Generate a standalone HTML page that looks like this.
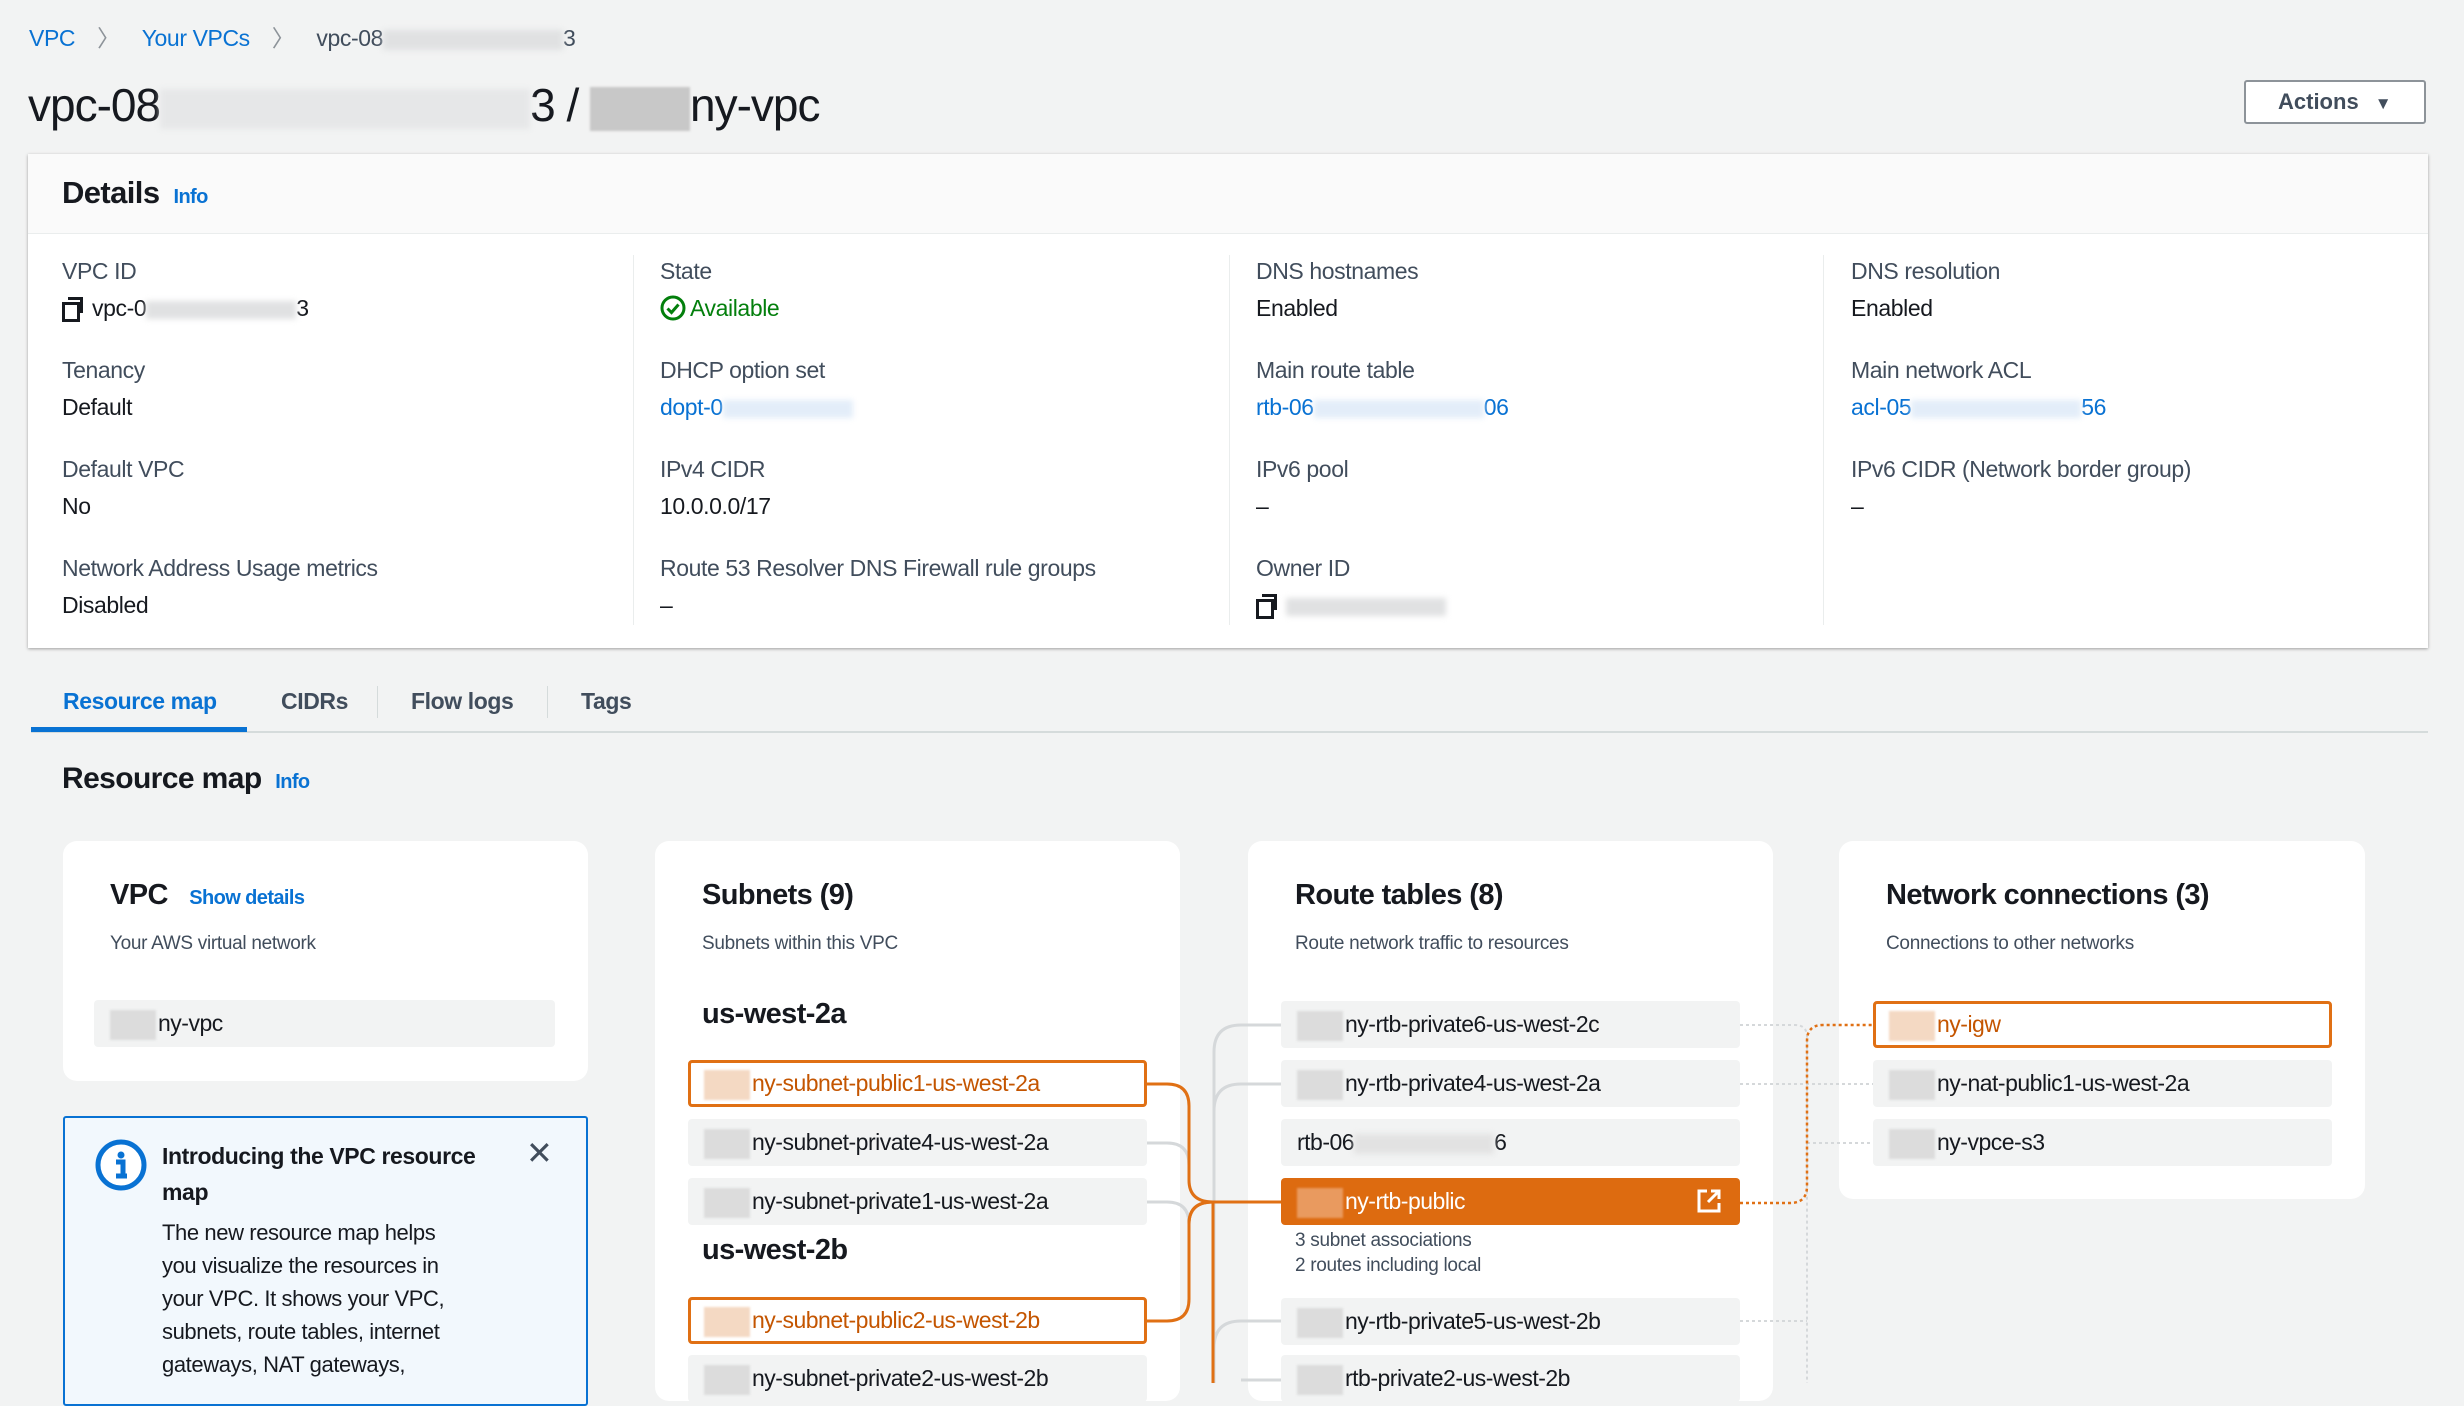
<!DOCTYPE html>
<html><head><meta charset="utf-8"><style>
*{box-sizing:border-box;margin:0;padding:0}
body{width:2464px;height:1383px;overflow:hidden;background:#f2f3f3;font-family:"Liberation Sans",sans-serif;color:#16191f;position:relative}
.a{position:absolute;white-space:nowrap}
.lnk{color:#0972d3}
.lbl{color:#414d5c;font-size:23px;letter-spacing:-0.4px}
.val{font-size:23px;letter-spacing:-0.4px}
.blur{display:inline-block;background:#e0e1e2;filter:blur(3px);vertical-align:middle}
.card{position:absolute;background:#fff;border-radius:14px}
.ct{position:absolute;font-size:29px;font-weight:bold;letter-spacing:-0.6px}
.cs{position:absolute;font-size:19px;color:#414d5c;letter-spacing:-0.3px}
.it{position:absolute;height:47px;background:#f2f3f3;border-radius:4px;font-size:23px;letter-spacing:-0.5px;line-height:47px;padding-left:16px;color:#16191f}
.it .sq{display:inline-block;width:46px;height:30px;background:#dcdcdc;vertical-align:middle;margin-right:2px;filter:blur(1px)}
.or{background:#fff;border:3px solid #e07014;color:#c45500;line-height:41px;padding-left:13px}
.or .sq{background:#f4d9c3}
.cp{display:inline-block;width:22px;height:22px;position:relative;vertical-align:-3px;margin-right:8px}
.cp:before{content:"";position:absolute;left:0;top:5px;width:12px;height:14px;border:3px solid #16191f}
.cp:after{content:"";position:absolute;left:6px;top:0;width:12px;height:13px;border-top:3px solid #16191f;border-right:3px solid #16191f}
</style></head><body>
<div class="a" style="left:29px;top:19px;font-size:23px;letter-spacing:-0.4px"><span class="lnk">VPC</span><span style="color:#8d9399;margin:0 22px">〉</span><span class="lnk">Your VPCs</span><span style="color:#8d9399;margin:0 22px">〉</span><span style="color:#414d5c">vpc-08<span class="blur" style="width:180px;height:20px"></span>3</span></div>
<div class="a" style="left:28px;top:78px;font-size:46px;letter-spacing:-1px">vpc-08<span class="blur" style="width:370px;height:40px;background:#e6e7e8"></span>3 / <span class="blur" style="width:100px;height:44px;background:#c8c8c8;filter:blur(1px)"></span>ny-vpc</div>
<div class="a" style="left:2244px;top:80px;width:182px;height:44px;border:2px solid #8d9399;border-radius:3px;background:#fff;font-size:22px;font-weight:bold;line-height:40px;padding-left:32px;color:#414d5c">Actions <span style="font-size:17px;margin-left:10px">▼</span></div>

<div class="a" style="left:28px;top:154px;width:2400px;height:494px;background:#fff;box-shadow:0 1px 3px rgba(0,0,0,.35)"></div>
<div class="a" style="left:28px;top:154px;width:2400px;height:80px;background:#fafafa;border-bottom:1px solid #eaeded"></div>
<div class="a" style="left:62px;top:175px;font-size:31px;font-weight:bold;letter-spacing:-0.6px">Details <span class="lnk" style="font-size:20px;margin-left:6px">Info</span></div>
<div class="a" style="left:633px;top:255px;width:1px;height:370px;background:#eaeded"></div>
<div class="a" style="left:1229px;top:255px;width:1px;height:370px;background:#eaeded"></div>
<div class="a" style="left:1823px;top:255px;width:1px;height:370px;background:#eaeded"></div>

<div class="a lbl" style="left:62px;top:258px">VPC ID</div>
<div class="a val" style="left:62px;top:295px"><span class="cp"></span>vpc-0<span class="blur" style="width:150px;height:18px"></span>3</div>
<div class="a lbl" style="left:62px;top:357px">Tenancy</div>
<div class="a val" style="left:62px;top:394px">Default</div>
<div class="a lbl" style="left:62px;top:456px">Default VPC</div>
<div class="a val" style="left:62px;top:493px">No</div>
<div class="a lbl" style="left:62px;top:555px">Network Address Usage metrics</div>
<div class="a val" style="left:62px;top:592px">Disabled</div>

<div class="a lbl" style="left:660px;top:258px">State</div>
<div class="a val" style="left:660px;top:295px;color:#037f0c"><svg width="26" height="26" viewBox="0 0 26 26" style="vertical-align:-5px;margin-right:4px"><circle cx="13" cy="13" r="11" fill="none" stroke="#037f0c" stroke-width="3"/><path d="M7.5 13.5l4 4 7-8" fill="none" stroke="#037f0c" stroke-width="3"/></svg>Available</div>
<div class="a lbl" style="left:660px;top:357px">DHCP option set</div>
<div class="a val lnk" style="left:660px;top:394px">dopt-0<span class="blur" style="width:130px;height:18px;background:#e3edf9"></span></div>
<div class="a lbl" style="left:660px;top:456px">IPv4 CIDR</div>
<div class="a val" style="left:660px;top:493px">10.0.0.0/17</div>
<div class="a lbl" style="left:660px;top:555px">Route 53 Resolver DNS Firewall rule groups</div>
<div class="a val" style="left:660px;top:592px">–</div>

<div class="a lbl" style="left:1256px;top:258px">DNS hostnames</div>
<div class="a val" style="left:1256px;top:295px">Enabled</div>
<div class="a lbl" style="left:1256px;top:357px">Main route table</div>
<div class="a val lnk" style="left:1256px;top:394px">rtb-06<span class="blur" style="width:170px;height:18px;background:#e3edf9"></span>06</div>
<div class="a lbl" style="left:1256px;top:456px">IPv6 pool</div>
<div class="a val" style="left:1256px;top:493px">–</div>
<div class="a lbl" style="left:1256px;top:555px">Owner ID</div>
<div class="a val" style="left:1256px;top:592px"><span class="cp"></span><span class="blur" style="width:160px;height:18px"></span></div>

<div class="a lbl" style="left:1851px;top:258px">DNS resolution</div>
<div class="a val" style="left:1851px;top:295px">Enabled</div>
<div class="a lbl" style="left:1851px;top:357px">Main network ACL</div>
<div class="a val lnk" style="left:1851px;top:394px">acl-05<span class="blur" style="width:170px;height:18px;background:#e3edf9"></span>56</div>
<div class="a lbl" style="left:1851px;top:456px">IPv6 CIDR (Network border group)</div>
<div class="a val" style="left:1851px;top:493px">–</div>

<div class="a" style="left:31px;top:731px;width:2397px;height:2px;background:#d5dbdb"></div>
<div class="a" style="left:31px;top:727px;width:216px;height:5px;background:#0972d3"></div>
<div class="a" style="left:377px;top:686px;width:1px;height:32px;background:#d5dbdb"></div>
<div class="a" style="left:547px;top:686px;width:1px;height:32px;background:#d5dbdb"></div>
<div class="a" style="left:63px;top:688px;font-size:23px;font-weight:bold;color:#0972d3;letter-spacing:-0.4px">Resource map</div>
<div class="a" style="left:281px;top:688px;font-size:23px;font-weight:bold;color:#414d5c;letter-spacing:-0.4px">CIDRs</div>
<div class="a" style="left:411px;top:688px;font-size:23px;font-weight:bold;color:#414d5c;letter-spacing:-0.4px">Flow logs</div>
<div class="a" style="left:581px;top:688px;font-size:23px;font-weight:bold;color:#414d5c;letter-spacing:-0.4px">Tags</div>
<div class="a" style="left:62px;top:762px;font-size:30px;font-weight:bold;letter-spacing:-0.6px">Resource map <span class="lnk" style="font-size:20px;margin-left:6px">Info</span></div>

<div class="card" style="left:63px;top:841px;width:525px;height:240px"></div>
<div class="card" style="left:655px;top:841px;width:525px;height:560px"></div>
<div class="card" style="left:1248px;top:841px;width:525px;height:560px"></div>
<div class="card" style="left:1839px;top:841px;width:526px;height:358px"></div>

<div class="ct" style="left:110px;top:879px">VPC <span class="lnk" style="font-size:20px;margin-left:14px">Show details</span></div>
<div class="cs" style="left:110px;top:933px">Your AWS virtual network</div>
<div class="it" style="left:94px;top:1000px;width:461px"><span class="sq"></span>ny-vpc</div>

<div class="a" style="left:63px;top:1116px;width:525px;height:290px;background:#f2f8fd;border:2px solid #0972d3;border-radius:3px"></div>
<svg class="a" style="left:94px;top:1138px" width="54" height="54" viewBox="0 0 54 54"><circle cx="27" cy="27" r="23" fill="#fff" stroke="#0972d3" stroke-width="5"/><circle cx="27" cy="17" r="3.5" fill="#0972d3"/><path d="M22 24h7v14M22 38h11" stroke="#0972d3" stroke-width="5" fill="none"/></svg>
<div class="a" style="left:162px;top:1138px;font-size:23px;font-weight:bold;line-height:36px;letter-spacing:-0.4px">Introducing the VPC resource<br>map</div>
<div class="a" style="left:526px;top:1134px;font-size:32px;color:#414d5c">✕</div>
<div class="a" style="left:162px;top:1216px;font-size:22px;line-height:33px;letter-spacing:-0.4px">The new resource map helps<br>you visualize the resources in<br>your VPC. It shows your VPC,<br>subnets, route tables, internet<br>gateways, NAT gateways,</div>

<div class="ct" style="left:702px;top:879px">Subnets (9)</div>
<div class="cs" style="left:702px;top:933px">Subnets within this VPC</div>
<div class="ct" style="left:702px;top:998px">us-west-2a</div>
<div class="it or" style="left:688px;top:1060px;width:459px"><span class="sq"></span>ny-subnet-public1-us-west-2a</div>
<div class="it" style="left:688px;top:1119px;width:459px"><span class="sq"></span>ny-subnet-private4-us-west-2a</div>
<div class="it" style="left:688px;top:1178px;width:459px"><span class="sq"></span>ny-subnet-private1-us-west-2a</div>
<div class="ct" style="left:702px;top:1234px">us-west-2b</div>
<div class="it or" style="left:688px;top:1297px;width:459px"><span class="sq"></span>ny-subnet-public2-us-west-2b</div>
<div class="it" style="left:688px;top:1355px;width:459px"><span class="sq"></span>ny-subnet-private2-us-west-2b</div>

<div class="ct" style="left:1295px;top:879px">Route tables (8)</div>
<div class="cs" style="left:1295px;top:933px">Route network traffic to resources</div>
<div class="it" style="left:1281px;top:1001px;width:459px"><span class="sq"></span>ny-rtb-private6-us-west-2c</div>
<div class="it" style="left:1281px;top:1060px;width:459px"><span class="sq"></span>ny-rtb-private4-us-west-2a</div>
<div class="it" style="left:1281px;top:1119px;width:459px">rtb-06<span class="blur" style="width:140px;height:20px;background:#e2e2e2"></span>6</div>
<div class="it" style="left:1281px;top:1178px;width:459px;background:#dd6b10;color:#fff"><span class="sq" style="background:#e99a5f"></span>ny-rtb-public<svg style="position:absolute;right:18px;top:10px" width="26" height="26" viewBox="0 0 26 26"><path d="M11 3H3v20h20v-8M15 3h8v8M23 3L12 14" fill="none" stroke="#fff" stroke-width="3"/></svg></div>
<div class="a" style="left:1295px;top:1228px;font-size:19px;line-height:25px;color:#414d5c;letter-spacing:-0.3px">3 subnet associations<br>2 routes including local</div>
<div class="it" style="left:1281px;top:1298px;width:459px"><span class="sq"></span>ny-rtb-private5-us-west-2b</div>
<div class="it" style="left:1281px;top:1355px;width:459px"><span class="sq"></span>rtb-private2-us-west-2b</div>

<div class="ct" style="left:1886px;top:879px">Network connections (3)</div>
<div class="cs" style="left:1886px;top:933px">Connections to other networks</div>
<div class="it or" style="left:1873px;top:1001px;width:459px"><span class="sq"></span>ny-igw</div>
<div class="it" style="left:1873px;top:1060px;width:459px"><span class="sq"></span>ny-nat-public1-us-west-2a</div>
<div class="it" style="left:1873px;top:1119px;width:459px"><span class="sq"></span>ny-vpce-s3</div>

<svg class="a" style="left:0;top:0" width="2464" height="1383">
<g fill="none" stroke="#d5d8da" stroke-width="3">
<path d="M1147 1143h20q22 0 22 22v15q0 22 24 22"/>
<path d="M1147 1202h20q22 0 22 22"/>
<path d="M1281 1025h-40q-27 0-27 27v331"/>
<path d="M1281 1084h-40q-27 0-27 27"/>
<path d="M1281 1321h-40q-27 0-27 27"/>
<path d="M1281 1380h-40"/>
</g>
<g fill="none" stroke="#e07014" stroke-width="3">
<path d="M1147 1084h20q22 0 22 22v74q0 22 24 22h68"/>
<path d="M1147 1321h20q22 0 22-22v-75q0-22 24-22"/>
<path d="M1213 1202q-24 0-24 22"/>
<path d="M1213 1202v181"/>
</g>
<g fill="none" stroke="#d5d8da" stroke-width="2" stroke-dasharray="3 3">
<path d="M1740 1025h55q12 0 12 12v346"/>
<path d="M1740 1084h133M1740 1321h67M1807 1143h66"/>
</g>
<path d="M1740 1203h50q17 0 17-17v-145q0-16 16-16h50" fill="none" stroke="#e07014" stroke-width="2.5" stroke-dasharray="3 3"/>
</svg>
</body></html>
